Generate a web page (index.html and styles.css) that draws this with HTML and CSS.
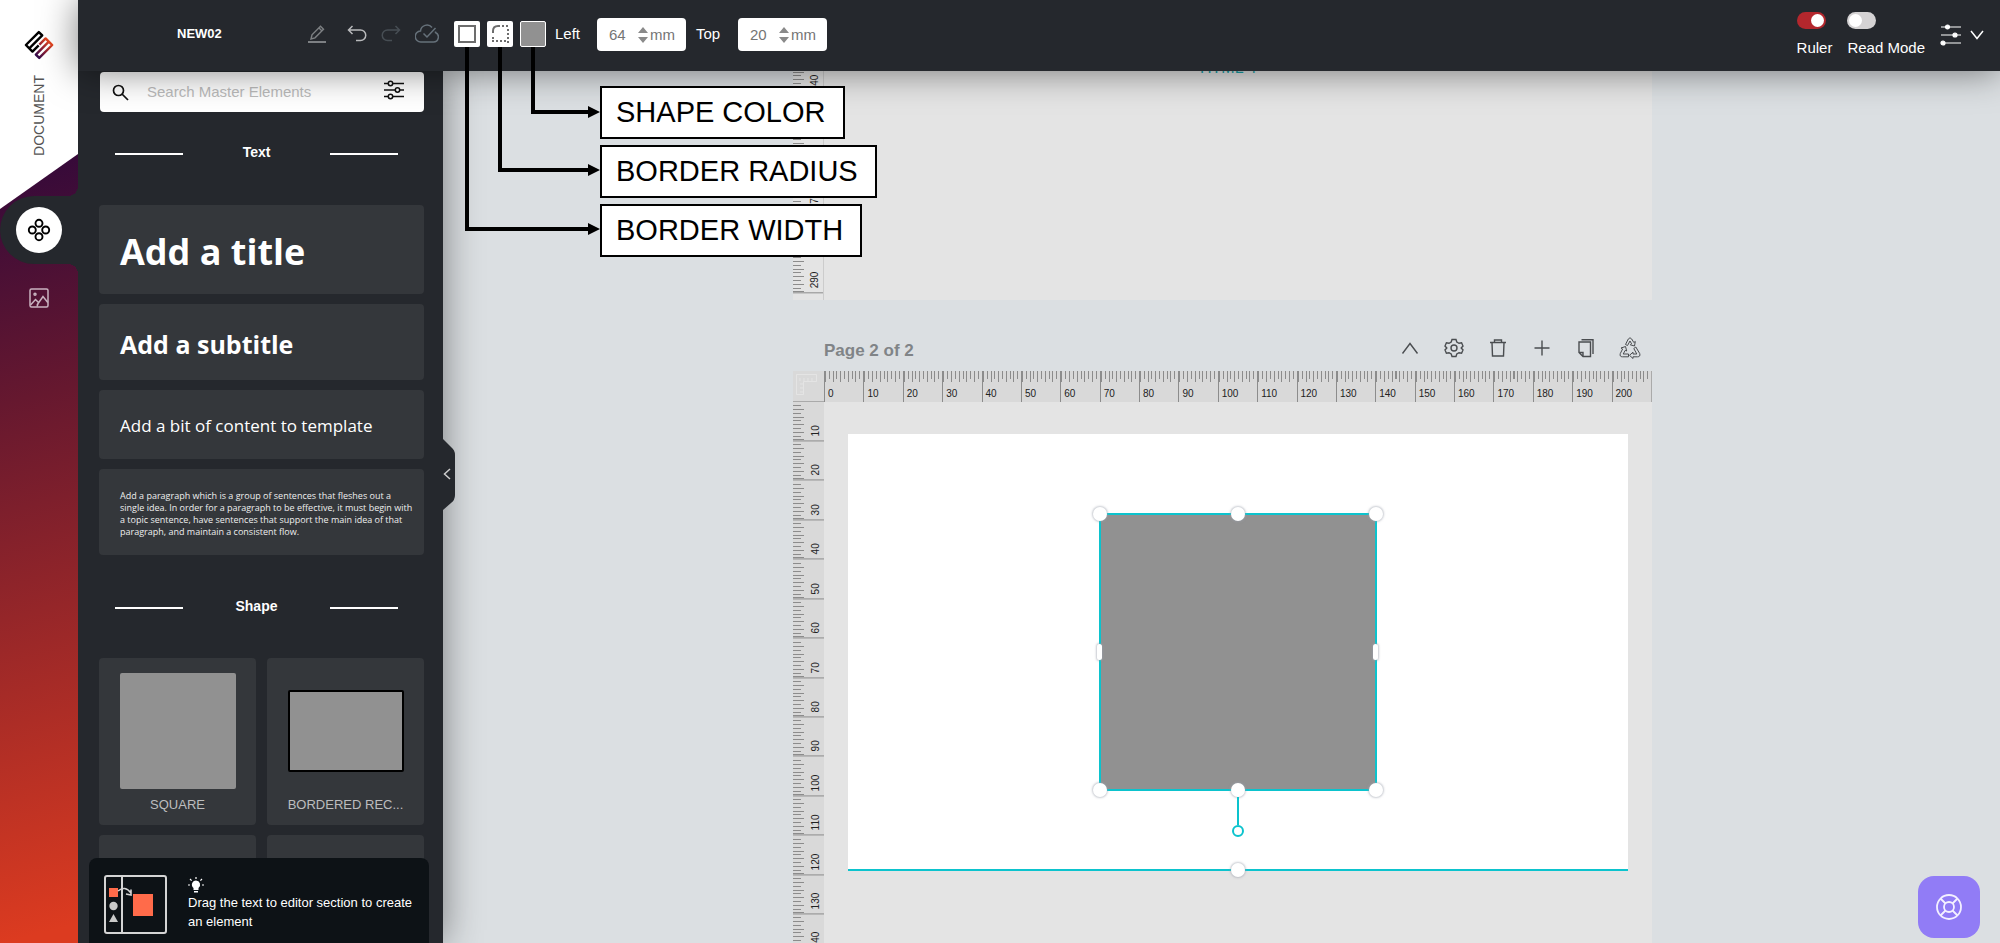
FILE: index.html
```html
<!DOCTYPE html>
<html lang="en">
<head>
<meta charset="utf-8">
<title>NEW02</title>
<link rel="stylesheet" href="styles.css">
</head>
<body>
<div class="app">
  <nav class="rail" aria-label="Sections">
    <div class="rail-head">
      <a href="#" class="logo" aria-label="Home">
        <svg width="30" height="30" viewBox="0 0 30 30" fill="none" stroke-width="2.4" stroke-linejoin="round">
          <defs><linearGradient id="lg" x1="0" y1="0" x2="21" y2="0" gradientUnits="userSpaceOnUse"><stop offset="0" stop-color="#2b0a4d"/><stop offset=".5" stop-color="#8d1f35"/><stop offset="1" stop-color="#ea4a1f"/></linearGradient></defs>
          <g transform="translate(.2 15) rotate(-45)">
            <path d="M1.200 1.200H19.500V6H1.200ZM1.200 6V10.500H10" stroke="#000"/>
            <path d="M1.500 19.800H19.800V15H1.500ZM19.800 15V10.500H11" stroke="url(#lg)"/>
          </g>
        </svg>
      </a>
      <span class="rail-name">DOCUMENT</span>
    </div>
    <div class="rail-active">
      <button class="rail-btn" aria-label="Elements">
        <svg width="24" height="24" viewBox="0 0 24 24" fill="none" stroke="#000" stroke-width="1.900"><circle cx="12" cy="5.300" r="3.500"/><circle cx="5.300" cy="12" r="3.500"/><circle cx="18.700" cy="12" r="3.500"/><circle cx="12" cy="18.700" r="3.500"/></svg>
      </button>
    </div>
    <button class="rail-img" aria-label="Images">
      <svg width="20" height="20" viewBox="0 0 20 20" fill="none" stroke="#c9b3c0" stroke-width="1.500"><rect x="1" y="1" width="18" height="18" rx="1.500"/><circle cx="6" cy="6.200" r="1"/><path d="M1.500 17L6.500 11.500L9.500 14.500L8 18.500M8 17L14 8.500L18.800 14.500"/></svg>
    </button>
  </nav>

  <div class="main">
    <header class="topbar">
      <h1 class="doc-title">NEW02</h1>
      <div class="history">
        <button class="tool" aria-label="Rename"><svg width="20" height="20" viewBox="0 0 20 20" fill="none" stroke="#7d8083" stroke-width="1.400"><path d="M4 15L5 10.800L13.500 2.200L16.500 5.200L8 13.800ZM12 4L15 7"/><path d="M1 18H19" stroke-width="2"/></svg></button>
        <button class="tool undo" aria-label="Undo"><svg width="20" height="20" viewBox="0 0 20 20" fill="none" stroke="#b9babc" stroke-width="1.500"><path d="M5.500 2L1.500 6L5.500 10M1.500 6H13.500A5 5 0 0 1 13.500 16.500H9"/></svg></button>
        <button class="tool" aria-label="Redo"><svg width="20" height="20" viewBox="0 0 20 20" fill="none" stroke="#474e54" stroke-width="1.500"><path d="M14.500 2L18.500 6L14.500 10M18.500 6H6.500A5 5 0 0 0 6.500 16.500H11"/></svg></button>
        <button class="tool" aria-label="Saved"><svg width="24" height="20" viewBox="0 0 24 20" fill="none" stroke="#66717a" stroke-width="1.500"><path d="M17 3.500A6.500 6.500 0 0 0 5.500 7A5.500 5.500 0 0 0 6 18H18A5 5 0 0 0 20.500 8.500V7.500M8.500 9.500L12 13L20.500 4"/></svg></button>
      </div>
      <div class="shape-tools">
        <button class="swatch" aria-label="Border width"><svg width="26" height="26" viewBox="0 0 26 26" fill="none" stroke="#6d6d6d" stroke-width="2"><path d="M5 5H21V21H5Z"/></svg></button>
        <button class="swatch" aria-label="Border radius"><svg width="26" height="26" viewBox="0 0 26 26" fill="none" stroke="#6d6d6d" stroke-width="2"><path d="M6 12V10Q6 5 11 5H13"/><path d="M15 5H22M21 8V22M19 20H4M6 18V14" stroke-dasharray="2 2"/></svg></button>
        <button class="swatch fill" aria-label="Shape color"></button>
      </div>
      <label class="field-label" for="left">Left</label>
      <div class="field"><input id="left" type="number" value="64"><svg width="10" height="18" viewBox="0 0 10 18" fill="#8a8a8a"><path d="M5 1L10 7H0ZM5 17L10 11H0Z"/></svg><span>mm</span></div>
      <label class="field-label" for="top">Top</label>
      <div class="field"><input id="top" type="number" value="20"><svg width="10" height="18" viewBox="0 0 10 18" fill="#8a8a8a"><path d="M5 1L10 7H0ZM5 17L10 11H0Z"/></svg><span>mm</span></div>
      <div class="view">
        <label class="switch"><input type="checkbox" checked>Ruler</label>
        <label class="switch"><input type="checkbox">Read Mode</label>
        <button class="menu" aria-label="Settings">
          <svg width="22" height="22" viewBox="0 0 22 22" fill="#fff" stroke="#fff" stroke-width="1.200"><path d="M1 3H21M1 11H21M1 19H21"/><circle cx="7.500" cy="3" r="2"/><circle cx="15" cy="11" r="2"/><circle cx="3" cy="19" r="2"/></svg>
          <svg width="14" height="10" viewBox="0 0 14 10" fill="none" stroke="#fff" stroke-width="1.500"><path d="M1 1L7 8.500L13 1"/></svg>
        </button>
      </div>
    </header>

    <div class="body">
      <aside class="panel">
        <div class="panel-scroll">
          <div class="search">
            <svg width="17" height="17" viewBox="0 0 17 17" fill="none" stroke="#111" stroke-width="1.700"><circle cx="6.500" cy="6.500" r="5"/><path d="M10 10L16 16"/></svg>
            <input type="text" placeholder="Search Master Elements" aria-label="Search Master Elements">
            <button aria-label="Filters"><svg width="20" height="20" viewBox="0 0 20 20" fill="#fff" stroke="#111" stroke-width="1.500"><path d="M0 3.500H20M0 10H20M0 16.500H20"/><circle cx="6.500" cy="3.500" r="2.200"/><circle cx="13.500" cy="10" r="2.200"/><circle cx="6.500" cy="16.500" r="2.200"/></svg></button>
          </div>
          <h2 class="divider">Text</h2>
          <div class="texts">
            <button class="card t1">Add a title</button>
            <button class="card t2">Add a subtitle</button>
            <button class="card t3">Add a bit of content to template</button>
            <button class="card t4">Add a paragraph which is a group of sentences that fleshes out a single idea. In order for a paragraph to be effective, it must begin with a topic sentence, have sentences that support the main idea of that paragraph, and maintain a consistent flow.</button>
          </div>
          <h2 class="divider second">Shape</h2>
          <div class="shapes">
            <button class="shape"><span class="pic square"></span><span class="cap">SQUARE</span></button>
            <button class="shape"><span class="pic rect"></span><span class="cap">BORDERED REC...</span></button>
            <button class="shape" aria-label="Circle"></button>
            <button class="shape" aria-label="Triangle"></button>
          </div>
        </div>
        <div class="tip">
          <svg width="63" height="59" viewBox="0 0 63 59" fill="none"><rect x="1" y="1" width="61" height="57" rx="2" stroke="#d4d4d4" stroke-width="2"/><path d="M18 1V58" stroke="#d4d4d4" stroke-width="2"/><path d="M5 13H14V22H5ZM29 19H49V41H29Z" fill="#ff6b4a"/><circle cx="9.500" cy="31" r="4.200" fill="#c9c9c9"/><path d="M9.500 39L14 47H5Z" fill="#c9c9c9"/><path d="M14 16Q21 10 27 18M27 14.500V20L22 19" stroke="#d4d4d4" stroke-width="1.600"/></svg>
          <div class="tip-text">
            <svg width="16" height="16" viewBox="0 0 16 16" fill="#fff"><path d="M8 3.500A4.200 4.200 0 0 1 10.500 11V13H5.500V11A4.200 4.200 0 0 1 8 3.500ZM6 14H10V15.500H6Z"/><path d="M8 0V2M2 2L3.600 3.600M14 2L12.400 3.600M0 8H2M14 8H16" stroke="#fff" stroke-width="1.200"/></svg>
            <p>Drag the text to editor section to create an element</p>
          </div>
        </div>
        <button class="collapse" aria-label="Collapse panel">
          <svg class="tab" width="12" height="72" viewBox="0 0 12 72" fill="#25282d"><path d="M0 0L8 8Q12 11 12 16V56Q12 61 8 64L0 71Z"/></svg>
          <svg class="arrow" width="8" height="12" viewBox="0 0 8 12" fill="none" stroke="#ccc" stroke-width="1.500"><path d="M7 1L1.500 6L7 11"/></svg>
        </button>
      </aside>

      <main class="workspace">
        <section class="doc">
          <div class="sheet first">
            <div class="vruler"><i>240</i><i>250</i><i>260</i><i>270</i><i>280</i><i>290</i><b></b></div>
            <div class="paper"><span class="doc-text">HTML 4</span></div>
          </div>
          <div class="page-head">
            <h2>Page 2 of 2</h2>
            <div class="page-tools">
              <button aria-label="Move up"><svg width="24" height="24" viewBox="0 0 24 24"><path d="M4.500 17.500L12 7.500L19.500 17.500"/></svg></button>
              <button aria-label="Page settings"><svg width="24" height="24" viewBox="0 0 24 24"><circle cx="12" cy="12" r="3"/><path d="M10 3.500H14L14.800 6L17 7.300L19.600 6.700L21 10L19.200 12L21 14L19.600 17.300L17 16.700L14.800 18L14 20.500H10L9.200 18L7 16.700L4.400 17.300L3 14L4.800 12L3 10L4.400 6.700L7 7.300L9.200 6Z"/></svg></button>
              <button aria-label="Delete page"><svg width="24" height="24" viewBox="0 0 24 24"><path d="M4 6.500H20M6 6.500L6.500 20H17.500L18 6.500M8.500 6V4H15.500V6"/></svg></button>
              <button aria-label="Add page"><svg width="24" height="24" viewBox="0 0 24 24"><path d="M4.500 12H19.500M12 4.500V19.500"/></svg></button>
              <button aria-label="Duplicate page"><svg width="24" height="24" viewBox="0 0 24 24"><path d="M5 6H16.500V20.500H9L5 16.500ZM5 16.500H9V20.500M7.500 3.700H19V18"/></svg></button>
              <button aria-label="Recycle page"><svg class="thin" width="24" height="24" viewBox="0 0 24 24"><path d="M7.500 8.500L10.300 3Q12 .5 13.700 3L15.800 6.500L17.300 5.500L16.500 10L12.300 8.800L13.600 7.800L12 5L9.500 9.500ZM17.800 11L21.700 17.500Q22.700 20.800 19.500 20.800H15V22.500L11.500 19.300L15 16.200V18H18.800L15.800 12.500ZM10.500 20.800H4.500Q1.300 20.800 2.300 17.500L4.600 13L3 12L7.500 10.500L8.700 15L7.200 14.400L5.200 18H10.500Z"/></svg></button>
            </div>
          </div>
          <div class="sheet second">
            <div class="corner"><svg width="21" height="21" viewBox="0 0 21 21" fill="none" stroke="#e4e4e4" stroke-width="1"><path d="M.5 .5H20.500V7.500H7.500V20.500H.5ZM4 4V7M8 4V7M12 4V7M16 4V7M4 10H7M4 14H7M4 18H7"/></svg></div>
            <div class="hruler"><i>0</i><i>10</i><i>20</i><i>30</i><i>40</i><i>50</i><i>60</i><i>70</i><i>80</i><i>90</i><i>100</i><i>110</i><i>120</i><i>130</i><i>140</i><i>150</i><i>160</i><i>170</i><i>180</i><i>190</i><i>200</i></div>
            <div class="vruler"><i>10</i><i>20</i><i>30</i><i>40</i><i>50</i><i>60</i><i>70</i><i>80</i><i>90</i><i>100</i><i>110</i><i>120</i><i>130</i><i>140</i></div>
            <div class="paper">
              <div class="block">
                <div class="selected">
                  <span class="dot nw"></span><span class="dot n"></span><span class="dot ne"></span>
                  <span class="bar w"></span><span class="bar e"></span>
                  <span class="dot sw"></span><span class="dot s"></span><span class="dot se"></span>
                  <span class="stem"></span><span class="rotate"></span>
                </div>
                <span class="dot s"></span>
              </div>
            </div>
          </div>
        </section>
      </main>
    </div>
  </div>

  <svg class="wires" width="530" height="260" viewBox="0 0 530 260" fill="none" stroke="#000" stroke-width="4"><path d="M27 47V229H150M60 47V170H150M93 47V112H150"/><path d="M148 106L160 112L148 118ZM148 164L160 170L148 176ZM148 223L160 229L148 235Z" fill="#000" stroke="none"/></svg>
  <ul class="notes"><li>SHAPE COLOR</li><li>BORDER RADIUS</li><li>BORDER WIDTH</li></ul>
  <button class="help" aria-label="Help"><svg width="26" height="26" viewBox="0 0 26 26" fill="none" stroke="#f3f0ff" stroke-width="1.800"><circle cx="13" cy="13" r="12"/><circle cx="13" cy="13" r="5"/><path d="M4.500 4.500L9.500 9.500M21.500 4.500L16.500 9.500M4.500 21.500L9.500 16.500M21.500 21.500L16.500 16.500"/></svg></button>
</div>
</body>
</html>
```
FILE: styles.css
```css
* { box-sizing: border-box; }
body { margin: 0; font-family: "Liberation Sans", Arial, sans-serif; font-size: 14px; }
button { border: 0; padding: 0; background: none; color: inherit; font: inherit; cursor: pointer; }
svg { display: block; flex: none; }
h1, h2, p, ul { margin: 0; padding: 0; }

.app { position: relative; display: flex; height: 100vh; overflow: hidden; }

/* left rail */
.rail { width: 78px; flex: none; display: flex; flex-direction: column; align-items: center; background: linear-gradient(165deg, #34093a 17%, #66182f 42%, #dc3b20 98%); }
.rail-head { width: 78px; height: 209px; margin-bottom: -13px; padding-top: 30px; display: flex; flex-direction: column; align-items: center; gap: 15px; background: #fff; clip-path: polygon(0 0, 100% 0, 100% 154px, 0 100%); }
.rail-name { writing-mode: vertical-rl; transform: rotate(180deg); font-size: 14px; line-height: 16px; color: #555; }
.rail-active { position: relative; width: 78px; height: 68px; display: flex; align-items: center; justify-content: center; background: #25282d; border-radius: 38px 0 0 38px; }
.rail-active::before, .rail-active::after { content: ""; position: absolute; right: 0; width: 10px; height: 10px; }
.rail-active::before { top: -10px; background: radial-gradient(circle at 0 0, transparent 10px, #25282d 10px); }
.rail-active::after { bottom: -10px; background: radial-gradient(circle at 0 100%, transparent 10px, #25282d 10px); }
.rail-btn { width: 46px; height: 46px; border-radius: 50%; background: #fff; display: grid; place-items: center; }
.rail-img { margin-top: 24px; }

/* top bar */
.main { flex: 1; min-width: 0; display: flex; flex-direction: column; }
.topbar { position: relative; z-index: 2; height: 71px; flex: none; display: flex; align-items: center; padding: 0 16px 17px 99px; background: #25282d; color: #fff; box-shadow: 0 0 36px rgba(0, 0, 0, .5); }
.doc-title { width: 130px; padding-top: 14px; font-size: 13px; line-height: 16px; }
.history { display: flex; align-items: center; gap: 14px; padding-top: 14px; }
.history .undo { margin-left: 6px; }
.shape-tools { display: flex; gap: 7px; margin: 14px 9px 0 15px; }
.swatch { width: 26px; height: 26px; border-radius: 2px; background: #fff; }
.swatch.fill { border: 1px solid #fff; background: #919191; }
.field-label { width: 42px; font-size: 15px; margin-top: 13px; }
.field { width: 89px; height: 33px; margin: 15px 10px 0 0; padding-left: 12px; display: flex; align-items: center; border-radius: 4px; background: #fff; color: #757575; font-size: 15px; }
.field input { width: 28px; margin-right: 1px; padding: 0; border: 0; font: inherit; color: inherit; appearance: textfield; }
.field input::-webkit-inner-spin-button { appearance: none; }
.field span { margin-left: 2px; }
.view { margin-left: auto; display: flex; gap: 15px; padding-top: 15px; }
.switch { display: flex; flex-direction: column; gap: 10px; font-size: 15px; line-height: 18px; }
.switch input { appearance: none; width: 29px; height: 17px; margin: 0; padding: 2px; border-radius: 9px; background: #d5d3d4; }
.switch input::before { content: ""; display: block; width: 13px; height: 13px; border-radius: 50%; background: #fff; }
.switch input:checked { background: #b3272d; }
.switch input:checked::before { margin-left: 12px; }
.menu { display: flex; align-items: center; gap: 8px; }

/* elements panel */
.body { flex: 1; min-height: 0; display: flex; }
.panel { position: relative; z-index: 1; width: 365px; flex: none; background: #25282d; color: #fff; box-shadow: 0 0 36px rgba(0, 0, 0, .45); clip-path: inset(0 -60px 0 0); }
.panel-scroll { height: 100%; overflow: hidden; padding: 1px 19px 0 21px; }
.search { height: 40px; margin-left: 1px; padding: 0 20px 0 12px; display: flex; align-items: center; border-radius: 4px; background: #fff; }
.search input { flex: 1; min-width: 0; margin: 0 0 2px 18px; padding: 0; border: 0; outline: 0; font: 15px "Liberation Sans", Arial, sans-serif; }
.search input::placeholder { color: #bbb; }
.search button { margin-bottom: 5px; }
.divider { display: flex; align-items: center; justify-content: space-between; padding: 0 26px 0 16px; margin: 31px 0 44px; font-size: 14px; line-height: 18px; }
.divider::before, .divider::after { content: ""; width: 68px; height: 2px; margin-top: 4px; background: #fff; }
.divider.second { margin: 42px 0 43px; }
.texts { display: grid; gap: 10px; }
.card { padding: 0 21px; border-radius: 4px; background: #34373b; text-align: left; font-family: "Open Sans", sans-serif; }
.t1 { height: 89px; padding-top: 4px; font-size: 36px; font-weight: 700; }
.t2 { height: 76px; padding-top: 4px; font-size: 25px; font-weight: 700; }
.t3 { height: 69px; padding-top: 2px; font-size: 17px; font-weight: 500; }
.t4 { height: 86px; padding: 4px 10px 0 21px; font-size: 9px; line-height: 12px; color: #eee; }
.shapes { display: grid; grid-template-columns: 1fr 1fr; gap: 10px 11px; }
.shape { height: 167px; min-width: 0; display: flex; flex-direction: column; align-items: center; border-radius: 4px; background: #34373b; }
.pic { width: 116px; background: #919191; border-radius: 2px; }
.square { height: 116px; margin: 15px 0 8px; }
.rect { height: 82px; margin: 32px 0 25px; border: 2px solid #000; }
.cap { font-size: 13px; line-height: 16px; color: #bcbdbf; }
.tip { position: absolute; left: 11px; right: 14px; bottom: 0; height: 85px; padding: 17px 15px 0; display: flex; gap: 21px; border-radius: 8px 8px 0 0; background: #0d1216; font-size: 13px; line-height: 19px; }
.tip-text svg { margin-top: 2px; }
.collapse { position: absolute; left: 100%; top: 368px; }
.collapse .arrow { position: absolute; left: 0; top: 29px; }

/* canvas */
.workspace { flex: 1; min-width: 0; overflow: hidden; display: flex; justify-content: center; background: #dbdfe2; }
.doc { width: 859px; flex: none; margin-left: 2px; }
.sheet { display: grid; grid-template-columns: 31px 1fr; }
.first { height: 229px; grid-template-rows: 243px; align-content: end; }
.paper { background: #e4e4e4; }
.doc-text { display: block; margin-left: 376px; padding-top: 1px; font-size: 16px; line-height: 20px; color: #17a2a8; }
.vruler { display: flex; flex-direction: column; background: #d9d9d9; color: #222; font-size: 10px; }
.vruler i, .hruler i { font-style: normal; }
.vruler i { flex: 1; writing-mode: vertical-rl; transform: rotate(180deg); display: flex; flex-direction: column; justify-content: flex-end; text-align: left; line-height: 12px; padding: 4px 2px 0; border-top: 1px solid #8c8c8c; background: repeating-linear-gradient(#8c8c8c 0 1px, transparent 1px 10%) right top / 8px 100% no-repeat, repeating-linear-gradient(#8c8c8c 0 1px, transparent 1px 20%) right top / 11px 100% no-repeat; }
.first .vruler { background: #e4e4e4; border-right: 1px solid #ccc; }
.first .vruler b { height: 7px; }
.page-head { height: 71px; padding: 24px 10px 0 31px; display: flex; align-items: center; justify-content: space-between; }
.page-head h2 { font-size: 17px; line-height: 20px; padding-top: 6px; color: #808487; }
.page-tools { display: flex; gap: 20px; }
.page-tools svg { fill: none; stroke: #4a4d50; stroke-width: 1.4px; }
.page-tools .thin { stroke-width: 1px; }
.second { grid-template-rows: 31px 552px; }
.corner { padding: 3px 0 0 3px; background: #d9d9d9; border-bottom: 1px solid #aaa; }
.hruler { display: flex; background: #d9d9d9; border-right: 1px solid #aaa; color: #222; font-size: 10px; }
.hruler i { flex: 1; line-height: 12px; padding: 17px 0 0 3px; border-left: 1px solid #8c8c8c; background: repeating-linear-gradient(90deg, #8c8c8c 0 1px, transparent 1px 10%) left top / 100% 8px no-repeat, repeating-linear-gradient(90deg, #8c8c8c 0 1px, transparent 1px 20%) left top / 100% 11px no-repeat; }
.second .paper { padding: 32px 24px 0; }
.block { position: relative; height: 437px; padding: 79px 0 0 251px; background: #fff; border-bottom: 2px solid #0cc3cd; }
.selected { position: relative; width: 278px; height: 278px; background: #919191; border: 2px solid #0cc3cd; }
.dot { position: absolute; width: 14px; height: 14px; margin: -7px; border-radius: 50%; background: #fff; box-shadow: 0 0 2px 1px #9aa0aa88; }
.n, .s { left: 50%; }
.nw, .n, .ne { top: -1px; }
.s, .sw, .se { top: calc(100% + 1px); }
.nw, .sw { left: -1px; }
.ne, .se { left: calc(100% + 1px); }
.bar { position: absolute; top: 50%; width: 5px; height: 16px; margin: -8px -3px; border-radius: 3px; background: #fff; box-shadow: 0 0 2px 1px #9aa0aa88; }
.w { left: -1px; }
.e { left: calc(100% + 1px); }
.stem { position: absolute; left: 50%; top: calc(100% + 8px); width: 2px; height: 28px; margin-left: -1px; background: #0cc3cd; }
.rotate { position: absolute; left: 50%; top: calc(100% + 36px); width: 12px; height: 12px; margin-left: -6px; border: 2px solid #0cc3cd; border-radius: 50%; background: #fff; }

/* callouts over the editor */
.wires { position: absolute; left: 440px; top: 0; z-index: 3; pointer-events: none; }
.notes { position: absolute; left: 600px; top: 86px; z-index: 3; display: flex; flex-direction: column; align-items: flex-start; gap: 6px; list-style: none; }
.notes li { padding: 0 17px 0 14px; border: 2px solid #000; background: #fff; font-size: 29px; line-height: 49px; color: #000; }
.help { position: absolute; right: 20px; bottom: 5px; z-index: 3; width: 62px; height: 62px; border-radius: 16px; background: #917cf6; display: grid; place-items: center; }
```
